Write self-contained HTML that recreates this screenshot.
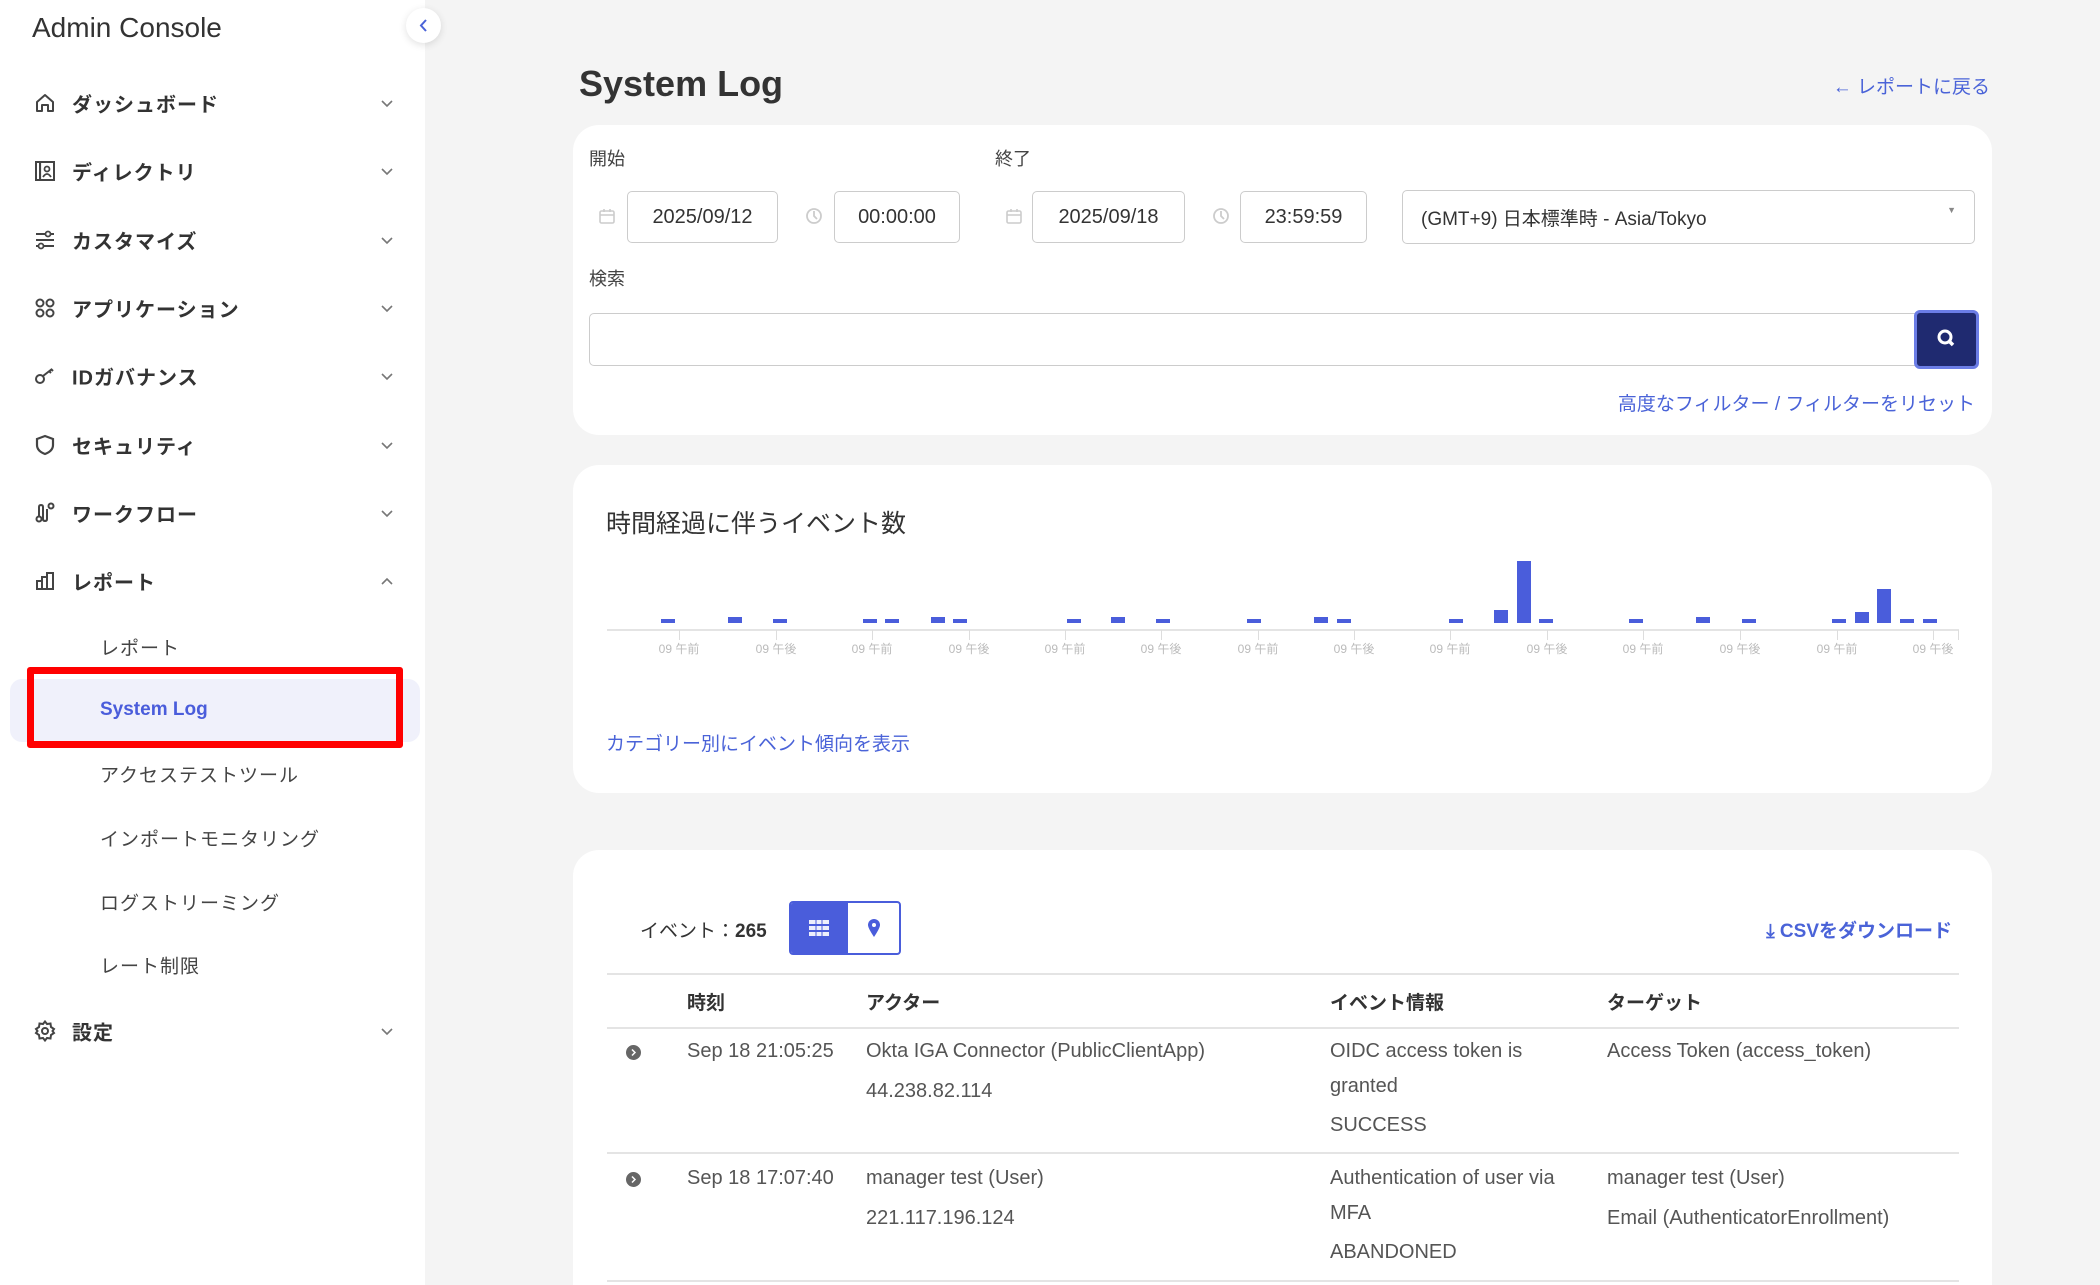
<!DOCTYPE html>
<html style="overflow:hidden;height:1285px"><head><meta charset="utf-8"><style>
*{margin:0;padding:0;box-sizing:border-box}
body{width:2100px;height:1285px;overflow:hidden;background:#f4f4f4;font-family:"Liberation Sans","Noto Sans CJK JP",sans-serif;color:#333;position:relative}
.a{position:absolute;white-space:nowrap}
#side{position:absolute;left:0;top:0;width:425px;height:1285px;background:#fff}
.nav{position:absolute;left:0;width:425px;height:40px}
.nav .t{position:absolute;left:72px;top:50%;transform:translateY(-50%);font-size:20px;font-weight:bold;color:#333;letter-spacing:1px}
.nav svg.i{position:absolute;left:33px;top:50%;transform:translateY(-50%)}
.nav svg.c{position:absolute;left:378px;top:50%;transform:translateY(-50%)}
.sub{position:absolute;left:100px;font-size:19px;color:#444;transform:translateY(-50%);letter-spacing:1px}
.card{position:absolute;left:573px;width:1419px;background:#fff;border-radius:26px}
.lbl{font-size:18px;color:#444}
.inp{position:absolute;border:1.5px solid #ccc;border-radius:5px;background:#fff;font-size:20px;color:#333;display:flex;align-items:center;justify-content:center;height:52px;top:191px}
.link{color:#4a63d8}
.bar{position:absolute;width:14px;background:#4a5ddb}
.tk{position:absolute;top:630px;width:1px;height:10px;background:#ddd}
.tl{position:absolute;top:640px;font-size:12px;color:#bbb;transform:translateX(-50%)}
.cell{font-size:20px;color:#555}
.hd{font-size:19px;font-weight:bold;color:#333}
</style></head><body>
<div id="side">
<div class="a" style="left:32px;top:12px;font-size:28px;color:#333">Admin Console</div>
</div>
<div class="a" style="left:406px;top:8px;width:35px;height:35px;border-radius:50%;background:#fff;box-shadow:0 2px 8px rgba(0,0,0,.12)"><svg width="35" height="35"><path d="M20 12 L15 17.5 L20 23" stroke="#4a63d8" stroke-width="2" fill="none"/></svg></div>

<div class="nav" style="top:83px"><svg class="i" width="24" height="24" viewBox="0 0 24 24"><path d="M4 11 L12 4 L20 11 V20 H15 V14 H9 V20 H4 Z" fill="none" stroke="#444" stroke-width="2" stroke-linejoin="round"/></svg><span class="t">ダッシュボード</span><svg class="c" width="18" height="18"><path d="M4 7 L9 12 L14 7" stroke="#777" stroke-width="1.6" fill="none"/></svg></div>
<div class="nav" style="top:151px"><svg class="i" width="24" height="24" viewBox="0 0 24 24"><rect x="3" y="3" width="18" height="18" fill="none" stroke="#444" stroke-width="2"/><rect x="7" y="3" width="0.1" height="18" stroke="#444" stroke-width="2"/><circle cx="14" cy="10" r="2.5" fill="none" stroke="#444" stroke-width="1.8"/><path d="M10 18 Q14 12 18 18" fill="none" stroke="#444" stroke-width="1.8"/></svg><span class="t">ディレクトリ</span><svg class="c" width="18" height="18"><path d="M4 7 L9 12 L14 7" stroke="#777" stroke-width="1.6" fill="none"/></svg></div>
<div class="nav" style="top:220px"><svg class="i" width="24" height="24" viewBox="0 0 24 24"><path d="M3 6 H21 M3 12 H21 M3 18 H21" stroke="#444" stroke-width="2"/><circle cx="15" cy="6" r="2.5" fill="#fff" stroke="#444" stroke-width="1.8"/><circle cx="8" cy="18" r="2.5" fill="#fff" stroke="#444" stroke-width="1.8"/></svg><span class="t">カスタマイズ</span><svg class="c" width="18" height="18"><path d="M4 7 L9 12 L14 7" stroke="#777" stroke-width="1.6" fill="none"/></svg></div>
<div class="nav" style="top:288px"><svg class="i" width="24" height="24" viewBox="0 0 24 24"><g fill="none" stroke="#444" stroke-width="2"><circle cx="7" cy="7" r="3.5"/><circle cx="17" cy="7" r="3.5"/><circle cx="7" cy="17" r="3.5"/><circle cx="17" cy="17" r="3.5"/></g></svg><span class="t">アプリケーション</span><svg class="c" width="18" height="18"><path d="M4 7 L9 12 L14 7" stroke="#777" stroke-width="1.6" fill="none"/></svg></div>
<div class="nav" style="top:356px"><svg class="i" width="24" height="24" viewBox="0 0 24 24"><g fill="none" stroke="#444" stroke-width="2"><circle cx="7" cy="15" r="4"/><path d="M10 12 L19 5 M16 7 L18 9 M18 5 L20 7"/></g></svg><span class="t">IDガバナンス</span><svg class="c" width="18" height="18"><path d="M4 7 L9 12 L14 7" stroke="#777" stroke-width="1.6" fill="none"/></svg></div>
<div class="nav" style="top:425px"><svg class="i" width="24" height="24" viewBox="0 0 24 24"><path d="M12 3 L20 6 V12 Q20 18 12 21 Q4 18 4 12 V6 Z" fill="none" stroke="#444" stroke-width="2.2"/></svg><span class="t">セキュリティ</span><svg class="c" width="18" height="18"><path d="M4 7 L9 12 L14 7" stroke="#777" stroke-width="1.6" fill="none"/></svg></div>
<div class="nav" style="top:493px"><svg class="i" width="24" height="24" viewBox="0 0 24 24"><g fill="none" stroke="#444" stroke-width="2"><circle cx="6" cy="18" r="2.5"/><circle cx="18" cy="5" r="2.5"/><path d="M6 15 V6 Q6 4 8 4 Q10 4 10 6 V18 Q10 20 12 20 Q14 20 14 18 V8"/></g></svg><span class="t">ワークフロー</span><svg class="c" width="18" height="18"><path d="M4 7 L9 12 L14 7" stroke="#777" stroke-width="1.6" fill="none"/></svg></div>
<div class="nav" style="top:561px"><svg class="i" width="24" height="24" viewBox="0 0 24 24"><g fill="none" stroke="#444" stroke-width="2"><path d="M3 20 H21"/><rect x="4" y="12" width="5" height="8"/><rect x="9" y="8" width="5" height="12"/><rect x="14" y="4" width="6" height="16"/></g></svg><span class="t">レポート</span><svg class="c" width="18" height="18"><path d="M4 12 L9 7 L14 12" stroke="#777" stroke-width="1.6" fill="none"/></svg></div>

<div class="sub" style="top:647px">レポート</div>
<div class="a" style="left:10px;top:679px;width:410px;height:63px;background:#f0f1fb;border-radius:12px"></div>
<div class="a" style="left:27px;top:667px;width:376px;height:81px;border:7px solid #ff0000;border-radius:3px"></div>
<div class="sub" style="top:710px;color:#4a5ddb;font-weight:bold;letter-spacing:0">System Log</div>
<div class="sub" style="top:774px">アクセステストツール</div>
<div class="sub" style="top:838px">インポートモニタリング</div>
<div class="sub" style="top:902px">ログストリーミング</div>
<div class="sub" style="top:965px">レート制限</div>
<div class="nav" style="top:1011px"><svg class="i" width="24" height="24" viewBox="0 0 24 24"><g fill="none" stroke="#444" stroke-width="2"><path d="M12 2.5 L14 5 L17.5 4.5 L18 8 L21 10 L19.5 12 L21 14 L18 16 L17.5 19.5 L14 19 L12 21.5 L10 19 L6.5 19.5 L6 16 L3 14 L4.5 12 L3 10 L6 8 L6.5 4.5 L10 5 Z"/><circle cx="12" cy="12" r="3"/></g></svg><span class="t">設定</span><svg class="c" width="18" height="18"><path d="M4 7 L9 12 L14 7" stroke="#777" stroke-width="1.6" fill="none"/></svg></div>

<div class="a" style="left:579px;top:63px;font-size:36px;font-weight:bold;color:#333">System Log</div>
<div class="a link" style="right:110px;top:72px;font-size:19px">← レポートに戻る</div>

<div class="card" style="top:125px;height:310px"></div>
<div class="a lbl" style="left:589px;top:145px">開始</div>
<div class="a lbl" style="left:995px;top:145px">終了</div>
<svg class="a" style="left:598px;top:207px" width="18" height="18" viewBox="0 0 18 18"><rect x="2" y="4" width="14" height="12" rx="1.5" fill="none" stroke="#ccc" stroke-width="1.6"/><path d="M2 8 H16 M6 2 V5 M12 2 V5" stroke="#ccc" stroke-width="1.6"/></svg>
<div class="inp" style="left:627px;width:151px">2025/09/12</div>
<svg class="a" style="left:805px;top:207px" width="18" height="18" viewBox="0 0 18 18"><circle cx="9" cy="9" r="7" fill="none" stroke="#ccc" stroke-width="1.8"/><path d="M9 4 V9 L12 12" stroke="#ccc" stroke-width="1.8" fill="none"/></svg>
<div class="inp" style="left:834px;width:126px">00:00:00</div>
<svg class="a" style="left:1005px;top:207px" width="18" height="18" viewBox="0 0 18 18"><rect x="2" y="4" width="14" height="12" rx="1.5" fill="none" stroke="#ccc" stroke-width="1.6"/><path d="M2 8 H16 M6 2 V5 M12 2 V5" stroke="#ccc" stroke-width="1.6"/></svg>
<div class="inp" style="left:1032px;width:153px">2025/09/18</div>
<svg class="a" style="left:1212px;top:207px" width="18" height="18" viewBox="0 0 18 18"><circle cx="9" cy="9" r="7" fill="none" stroke="#ccc" stroke-width="1.8"/><path d="M9 4 V9 L12 12" stroke="#ccc" stroke-width="1.8" fill="none"/></svg>
<div class="inp" style="left:1240px;width:127px">23:59:59</div>
<div class="inp" style="left:1402px;width:573px;top:190px;height:54px;justify-content:flex-start;padding-left:18px;font-size:19px">(GMT+9) 日本標準時 - Asia/Tokyo<span style="position:absolute;right:18px;top:14px;font-size:9px;color:#888">▼</span></div>
<div class="a lbl" style="left:589px;top:265px">検索</div>
<div class="a" style="left:589px;top:313px;width:1330px;height:53px;border:1.5px solid #ccc;border-radius:5px 0 0 5px;background:#fff"></div>
<div class="a" style="left:1914px;top:310px;width:65px;height:59px;background:#1f2a70;border:3px solid #6b7de6;border-radius:6px"><svg width="59" height="53"><circle cx="28" cy="24" r="6" fill="none" stroke="#fff" stroke-width="3"/><path d="M32 28 L36 32" stroke="#fff" stroke-width="3.5"/></svg></div>
<div class="a link" style="right:125px;top:389px;font-size:19px">高度なフィルター / フィルターをリセット</div>

<div class="card" style="top:465px;height:328px"></div>
<div class="a" style="left:606px;top:504px;font-size:25px;color:#333">時間経過に伴うイベント数</div>
<div class="a" style="left:607px;top:629px;width:1352px;height:2px;background:#e4e4e4"></div>
<div class="bar" style="left:661px;top:619px;height:4px"></div>
<div class="bar" style="left:728px;top:617px;height:6px"></div>
<div class="bar" style="left:773px;top:619px;height:4px"></div>
<div class="bar" style="left:863px;top:619px;height:4px"></div>
<div class="bar" style="left:885px;top:619px;height:4px"></div>
<div class="bar" style="left:931px;top:617px;height:6px"></div>
<div class="bar" style="left:953px;top:619px;height:4px"></div>
<div class="bar" style="left:1067px;top:619px;height:4px"></div>
<div class="bar" style="left:1111px;top:617px;height:6px"></div>
<div class="bar" style="left:1156px;top:619px;height:4px"></div>
<div class="bar" style="left:1247px;top:619px;height:4px"></div>
<div class="bar" style="left:1314px;top:617px;height:6px"></div>
<div class="bar" style="left:1337px;top:619px;height:4px"></div>
<div class="bar" style="left:1449px;top:619px;height:4px"></div>
<div class="bar" style="left:1494px;top:610px;height:13px"></div>
<div class="bar" style="left:1517px;top:561px;height:62px"></div>
<div class="bar" style="left:1539px;top:619px;height:4px"></div>
<div class="bar" style="left:1629px;top:619px;height:4px"></div>
<div class="bar" style="left:1696px;top:617px;height:6px"></div>
<div class="bar" style="left:1742px;top:619px;height:4px"></div>
<div class="bar" style="left:1832px;top:619px;height:4px"></div>
<div class="bar" style="left:1855px;top:612px;height:11px"></div>
<div class="bar" style="left:1877px;top:589px;height:34px"></div>
<div class="bar" style="left:1900px;top:619px;height:4px"></div>
<div class="bar" style="left:1923px;top:619px;height:4px"></div>
<div class="tk" style="left:679px"></div><div class="tl" style="left:679px">09 午前</div>
<div class="tk" style="left:776px"></div><div class="tl" style="left:776px">09 午後</div>
<div class="tk" style="left:872px"></div><div class="tl" style="left:872px">09 午前</div>
<div class="tk" style="left:969px"></div><div class="tl" style="left:969px">09 午後</div>
<div class="tk" style="left:1065px"></div><div class="tl" style="left:1065px">09 午前</div>
<div class="tk" style="left:1161px"></div><div class="tl" style="left:1161px">09 午後</div>
<div class="tk" style="left:1258px"></div><div class="tl" style="left:1258px">09 午前</div>
<div class="tk" style="left:1354px"></div><div class="tl" style="left:1354px">09 午後</div>
<div class="tk" style="left:1450px"></div><div class="tl" style="left:1450px">09 午前</div>
<div class="tk" style="left:1547px"></div><div class="tl" style="left:1547px">09 午後</div>
<div class="tk" style="left:1643px"></div><div class="tl" style="left:1643px">09 午前</div>
<div class="tk" style="left:1740px"></div><div class="tl" style="left:1740px">09 午後</div>
<div class="tk" style="left:1837px"></div><div class="tl" style="left:1837px">09 午前</div>
<div class="tk" style="left:1933px"></div><div class="tl" style="left:1933px">09 午後</div>
<div class="tk" style="left:1958px"></div>
<div class="a link" style="left:606px;top:729px;font-size:19px">カテゴリー別にイベント傾向を表示</div>

<div class="card" style="top:850px;height:435px;border-radius:26px 26px 0 0"></div>
<div class="a" style="left:640px;top:916px;font-size:19px;color:#333">イベント：<b>265</b></div>
<div class="a" style="left:789px;top:901px;width:112px;height:54px;border:2px solid #4a5ddb;border-radius:4px;background:#fff;overflow:hidden"><div style="position:absolute;left:0;top:0;width:57px;height:54px;background:#4a5ddb"></div>
<svg style="position:absolute;left:18px;top:17px" width="20" height="16"><g fill="#fff"><rect x="0" y="0" width="20" height="4" opacity=".9"/><rect x="0" y="6" width="20" height="4" opacity=".9"/><rect x="0" y="12" width="20" height="4" opacity=".9"/></g><path d="M7 0 V16 M13 0 V16" stroke="#4a5ddb" stroke-width="1"/></svg>
<svg style="position:absolute;left:76px;top:15px" width="14" height="20" viewBox="0 0 14 20"><path d="M7 19 Q1 10 1 7 A6 6 0 0 1 13 7 Q13 10 7 19 Z" fill="#4a5ddb"/><circle cx="7" cy="7" r="2" fill="#fff"/></svg></div>
<div class="a link" style="right:148px;top:916px;font-size:19px;font-weight:bold">⤓ CSVをダウンロード</div>
<div class="a" style="left:607px;top:973px;width:1352px;height:2px;background:#e4e4e4"></div>
<div class="a hd" style="left:687px;top:988px">時刻</div>
<div class="a hd" style="left:866px;top:988px">アクター</div>
<div class="a hd" style="left:1330px;top:988px">イベント情報</div>
<div class="a hd" style="left:1607px;top:988px">ターゲット</div>
<div class="a" style="left:607px;top:1027px;width:1352px;height:2px;background:#e4e4e4"></div>
<div class="a" style="left:626px;top:1045px;width:15px;height:15px;border-radius:50%;background:#666"><svg width="15" height="15"><path d="M6 4.5 L9 7.5 L6 10.5" stroke="#fff" stroke-width="1.5" fill="none"/></svg></div>
<div class="a cell" style="left:687px;top:1040px">Sep 18 21:05:25</div>
<div class="a cell" style="left:866px;top:1040px">Okta IGA Connector (PublicClientApp)</div>
<div class="a cell" style="left:866px;top:1080px">44.238.82.114</div>
<div class="a cell" style="left:1330px;top:1040px">OIDC access token is</div>
<div class="a cell" style="left:1330px;top:1075px">granted</div>
<div class="a cell" style="left:1330px;top:1114px">SUCCESS</div>
<div class="a cell" style="left:1607px;top:1040px">Access Token (access_token)</div>
<div class="a" style="left:607px;top:1152px;width:1352px;height:2px;background:#e4e4e4"></div>
<div class="a" style="left:626px;top:1172px;width:15px;height:15px;border-radius:50%;background:#666"><svg width="15" height="15"><path d="M6 4.5 L9 7.5 L6 10.5" stroke="#fff" stroke-width="1.5" fill="none"/></svg></div>
<div class="a cell" style="left:687px;top:1167px">Sep 18 17:07:40</div>
<div class="a cell" style="left:866px;top:1167px">manager test (User)</div>
<div class="a cell" style="left:866px;top:1207px">221.117.196.124</div>
<div class="a cell" style="left:1330px;top:1167px">Authentication of user via</div>
<div class="a cell" style="left:1330px;top:1202px">MFA</div>
<div class="a cell" style="left:1330px;top:1241px">ABANDONED</div>
<div class="a cell" style="left:1607px;top:1167px">manager test (User)</div>
<div class="a cell" style="left:1607px;top:1207px">Email (AuthenticatorEnrollment)</div>
<div class="a" style="left:607px;top:1280px;width:1352px;height:2px;background:#e4e4e4"></div>
</body></html>
